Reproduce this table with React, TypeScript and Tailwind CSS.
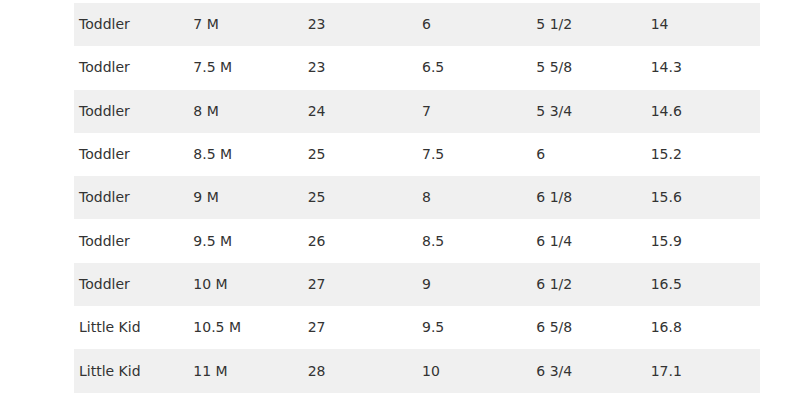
import React from 'react';

const rows = [
  ['Toddler', '7 M', '23', '6', '5 1/2', '14'],
  ['Toddler', '7.5 M', '23', '6.5', '5 5/8', '14.3'],
  ['Toddler', '8 M', '24', '7', '5 3/4', '14.6'],
  ['Toddler', '8.5 M', '25', '7.5', '6', '15.2'],
  ['Toddler', '9 M', '25', '8', '6 1/8', '15.6'],
  ['Toddler', '9.5 M', '26', '8.5', '6 1/4', '15.9'],
  ['Toddler', '10 M', '27', '9', '6 1/2', '16.5'],
  ['Little Kid', '10.5 M', '27', '9.5', '6 5/8', '16.8'],
  ['Little Kid', '11 M', '28', '10', '6 3/4', '17.1'],
];

const App = () => {
  return (
    <div className="min-h-screen bg-white pt-[3px] pl-[74px] font-['DejaVu_Sans',Verdana,sans-serif] text-[14px] text-[#333]">
      <div className="w-[686px] flex flex-col">
        {rows.map((row, i) => (
          <div
            key={i}
            className={`grid grid-cols-6 h-[43.3px] items-center ${i % 2 === 0 ? 'bg-[#f0f0f0]' : 'bg-white'}`}
          >
            {row.map((cell, j) => (
              <div key={j} className="pl-[5px]">
                {cell}
              </div>
            ))}
          </div>
        ))}
      </div>
    </div>
  );
};

export default App;
